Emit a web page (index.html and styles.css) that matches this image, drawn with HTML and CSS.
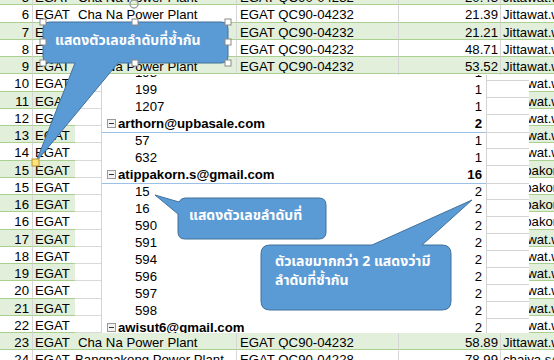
FILE: index.html
```html
<!DOCTYPE html>
<html>
<head>
<meta charset="utf-8">
<link rel="stylesheet" href="styles.css">
</head>
<body>
<div class="sheet">
  <div class="row green"><span class="c a">5</span><span class="c b">EGAT</span><span class="c cc">Cha Na Power Plant</span><span class="c d">EGAT QC90-04232</span><span class="c e">20.43</span><span class="c f">Jittawat.w@egat.co.th</span></div>
  <div class="row"><span class="c a">6</span><span class="c b">EGAT</span><span class="c cc">Cha Na Power Plant</span><span class="c d">EGAT QC90-04232</span><span class="c e">21.39</span><span class="c f">Jittawat.w@egat.co.th</span></div>
  <div class="row green"><span class="c a">7</span><span class="c b">EGAT</span><span class="c cc">Cha Na Power Plant</span><span class="c d">EGAT QC90-04232</span><span class="c e">21.21</span><span class="c f">Jittawat.w@egat.co.th</span></div>
  <div class="row"><span class="c a">8</span><span class="c b">EGAT</span><span class="c cc">Cha Na Power Plant</span><span class="c d">EGAT QC90-04232</span><span class="c e">48.71</span><span class="c f">Jittawat.w@egat.co.th</span></div>
  <div class="row green"><span class="c a">9</span><span class="c b">EGAT</span><span class="c cc">Cha Na Power Plant</span><span class="c d">EGAT QC90-04232</span><span class="c e">53.52</span><span class="c f">Jittawat.w@egat.co.th</span></div>
  <div class="row sub"><span class="c a">10</span><span class="c b">EGAT</span><span class="c cc"></span><span class="c d"></span><span class="c e"></span><span class="c f">Jittawat.w@egat.co.th</span></div>
  <div class="row sub green"><span class="c a">11</span><span class="c b">EGAT</span><span class="c cc"></span><span class="c d"></span><span class="c e"></span><span class="c f">Jittawat.w@egat.co.th</span></div>
  <div class="row sub"><span class="c a">12</span><span class="c b">EGAT</span><span class="c cc"></span><span class="c d"></span><span class="c e"></span><span class="c f">Jittawat.w@egat.co.th</span></div>
  <div class="row sub green"><span class="c a">13</span><span class="c b">EGAT</span><span class="c cc"></span><span class="c d"></span><span class="c e"></span><span class="c f">Jittawat.w@egat.co.th</span></div>
  <div class="row sub"><span class="c a">14</span><span class="c b">EGAT</span><span class="c cc"></span><span class="c d"></span><span class="c e"></span><span class="c f">Jittawat.w@egat.co.th</span></div>
  <div class="row sub green"><span class="c a">15</span><span class="c b">EGAT</span><span class="c cc"></span><span class="c d"></span><span class="c e"></span><span class="c f">atippakorn.s@gmail.com</span></div>
  <div class="row sub"><span class="c a">15</span><span class="c b">EGAT</span><span class="c cc"></span><span class="c d"></span><span class="c e"></span><span class="c f">atippakorn.s@gmail.com</span></div>
  <div class="row sub green"><span class="c a">16</span><span class="c b">EGAT</span><span class="c cc"></span><span class="c d"></span><span class="c e"></span><span class="c f">atippakorn.s@gmail.com</span></div>
  <div class="row sub"><span class="c a">16</span><span class="c b">EGAT</span><span class="c cc"></span><span class="c d"></span><span class="c e"></span><span class="c f">atippakorn.s@gmail.com</span></div>
  <div class="row sub green"><span class="c a">17</span><span class="c b">EGAT</span><span class="c cc"></span><span class="c d"></span><span class="c e"></span><span class="c f">Jittawat.w@egat.co.th</span></div>
  <div class="row sub"><span class="c a">18</span><span class="c b">EGAT</span><span class="c cc"></span><span class="c d"></span><span class="c e"></span><span class="c f">Jittawat.w@egat.co.th</span></div>
  <div class="row sub green"><span class="c a">19</span><span class="c b">EGAT</span><span class="c cc"></span><span class="c d"></span><span class="c e"></span><span class="c f">Jittawat.w@egat.co.th</span></div>
  <div class="row sub"><span class="c a">20</span><span class="c b">EGAT</span><span class="c cc"></span><span class="c d"></span><span class="c e"></span><span class="c f">Jittawat.w@egat.co.th</span></div>
  <div class="row sub green"><span class="c a">21</span><span class="c b">EGAT</span><span class="c cc"></span><span class="c d"></span><span class="c e"></span><span class="c f">Jittawat.w@egat.co.th</span></div>
  <div class="row sub"><span class="c a">22</span><span class="c b">EGAT</span><span class="c cc"></span><span class="c d"></span><span class="c e"></span><span class="c f">Jittawat.w@egat.co.th</span></div>
  <div class="row green"><span class="c a">23</span><span class="c b">EGAT</span><span class="c cc">Cha Na Power Plant</span><span class="c d">EGAT QC90-04232</span><span class="c e">58.89</span><span class="c f">Jittawat.w@egat.co.th</span></div>
  <div class="row"><span class="c a">24</span><span class="c b">EGAT</span><span class="c cc tight">Bangpakong Power Plant</span><span class="c d">EGAT QC90-04228</span><span class="c e">78.99</span><span class="c f">chaiya.s@egat.co.th</span></div>
</div>

<div class="pivot">
  <div class="pivot-inner">
    <div class="prow"><div class="pcell"><span class="item">198</span><span class="val">1</span></div><div class="strip"></div></div>
    <div class="prow"><div class="pcell"><span class="item">199</span><span class="val">1</span></div><div class="strip"></div></div>
    <div class="prow"><div class="pcell"><span class="item">1207</span><span class="val">1</span></div><div class="strip"></div></div>
    <div class="prow"><div class="pcell head"><span class="hlabel"><span class="minus"></span>arthorn@upbasale.com</span><span class="val">2</span></div><div class="strip"></div></div>
    <div class="prow"><div class="pcell"><span class="item">57</span><span class="val">1</span></div><div class="strip"></div></div>
    <div class="prow"><div class="pcell"><span class="item">632</span><span class="val">1</span></div><div class="strip"></div></div>
    <div class="prow"><div class="pcell head"><span class="hlabel"><span class="minus"></span>atippakorn.s@gmail.com</span><span class="val">16</span></div><div class="strip"></div></div>
    <div class="prow"><div class="pcell"><span class="item">15</span><span class="val">2</span></div><div class="strip"></div></div>
    <div class="prow"><div class="pcell"><span class="item">16</span><span class="val">2</span></div><div class="strip"></div></div>
    <div class="prow"><div class="pcell"><span class="item">590</span><span class="val">2</span></div><div class="strip"></div></div>
    <div class="prow"><div class="pcell"><span class="item">591</span><span class="val">2</span></div><div class="strip"></div></div>
    <div class="prow"><div class="pcell"><span class="item">594</span><span class="val">2</span></div><div class="strip"></div></div>
    <div class="prow"><div class="pcell"><span class="item">596</span><span class="val">2</span></div><div class="strip"></div></div>
    <div class="prow"><div class="pcell"><span class="item">597</span><span class="val">2</span></div><div class="strip"></div></div>
    <div class="prow"><div class="pcell"><span class="item">598</span><span class="val">2</span></div><div class="strip"></div></div>
    <div class="prow"><div class="pcell head"><span class="hlabel"><span class="minus"></span>awisut6@gmail.com</span><span class="val plain">2</span></div><div class="strip"></div></div>
  </div>
</div>

<svg class="callouts" width="554" height="360" viewBox="0 0 554 360">
  <path class="shape" d="M50,22 H221 Q228,22 228,29 V56 Q228,63 221,63 H118 L36,162 L75,63 H50 Q43,63 43,56 V29 Q43,22 50,22 Z"/>
  <text class="ctext" x="55" y="45">แสดงตัวเลขลำดับที่ซ้ำกัน</text>
  <rect class="handle" x="40" y="19" width="6" height="6"/>
  <rect class="handle" x="132" y="19" width="6" height="6"/>
  <rect class="handle" x="225" y="19" width="6" height="6"/>
  <rect class="handle" x="40" y="39" width="6" height="6"/>
  <rect class="handle" x="225" y="39" width="6" height="6"/>
  <rect class="handle" x="40" y="60" width="6" height="6"/>
  <rect class="handle" x="132" y="60" width="6" height="6"/>
  <rect class="handle" x="225" y="60" width="6" height="6"/>
  <circle class="rot" cx="134" cy="4" r="4"/>
  <rect class="adj" x="32" y="159" width="7" height="7"/>

  <path class="shape" d="M185,198 H319 Q326,198 326,205 V232 Q326,239 319,239 H185 Q178,239 178,232 V214 L155,195 L179,202 Q181,198 185,198 Z"/>
  <text class="ctext" x="189" y="220">แสดงตัวเลขลำดับที่</text>

  <path class="shape" d="M270,245 H372 L472,200 L422,245 H442 Q451,245 451,254 V301 Q451,310 442,310 H270 Q261,310 261,301 V254 Q261,245 270,245 Z"/>
  <text class="ctext" x="275" y="266">ตัวเลขมากกว่า 2 แสดงว่ามี</text>
  <text class="ctext" x="275" y="285">ลำดับที่ซ้ำกัน</text>
</svg>
</body>
</html>
```

FILE: styles.css
```css
* { box-sizing: border-box; }
html, body {
  margin: 0;
  padding: 0;
  width: 554px;
  height: 360px;
  overflow: hidden;
  background: #fff;
  font-family: "Liberation Sans", Arial, sans-serif;
  font-size: 13.2px;
  color: #000;
}
.sheet {
  margin-top: -12px;
}
.row {
  display: grid;
  grid-template-columns: 33px 42px 162px 162px 102px 53px;
  height: 17.25px;
}
.c {
  display: block;
  white-space: pre;
  overflow: hidden;
  line-height: 17px;
  padding-top: 1px;
  border-bottom: 1px solid #a9d08e;
  background: #fff;
}
.row.green .c { background: #e2efda; }
.a {
  text-align: right;
  padding-right: 3px;
  border-right: 1px solid #d6d6d6;
}
.b { padding-left: 2px; }
.cc { padding-left: 3px; border-right: 1px solid #d6d6d6; }
.cc.tight { padding-left: 0; }
.d { padding-left: 3px; border-right: 1px solid #d6d6d6; }
.e { text-align: right; padding-right: 2px; border-right: 1px solid #d6d6d6; }
.f { padding-left: 2px; }
.row.sub .cc,
.row.sub.green .cc {
  background: #fff;
  border-bottom: 1px solid #d9d9d9;
  border-right: none;
}

.pivot {
  position: absolute;
  left: 101px;
  top: 75px;
  width: 428px;
  height: 258px;
  overflow: hidden;
  background: #fff;
  border-left: 1px solid #d4d4d4;
}
.pivot-inner { margin-top: -11px; }
.prow {
  display: grid;
  grid-template-columns: 384px 43px;
  height: 17px;
}
.pcell {
  display: flex;
  align-items: center;
  justify-content: space-between;
  padding-right: 4px;
  line-height: 17px;
}
.pcell.head {
  border-bottom: 1px solid #9bc2e6;
  font-weight: bold;
}
.item { padding-left: 33px; }
.hlabel {
  display: flex;
  align-items: center;
  padding-left: 5px;
}
.minus {
  position: relative;
  width: 9px;
  height: 9px;
  margin-right: 2px;
  border: 1px solid #9a9a9a;
  background: #f3f3f3;
}
.minus::after {
  content: "";
  position: absolute;
  left: 1px;
  right: 1px;
  top: 3px;
  height: 1px;
  background: #333;
}
.val.plain { font-weight: normal; }
.strip {
  border-left: 1px solid #d4d4d4;
  border-bottom: 1px solid #d4d4d4;
}

.callouts {
  position: absolute;
  left: 0;
  top: 0;
  pointer-events: none;
}
.shape {
  fill: #5b9bd5;
  stroke: #41719c;
  stroke-width: 1;
}
.ctext {
  fill: #fff;
  font-family: "Noto Sans Thai", Tahoma, "DejaVu Sans", sans-serif;
  font-size: 14px;
  font-weight: bold;
}
.handle {
  fill: #fff;
  stroke: #8a8a8a;
  stroke-width: 1;
}
.rot {
  fill: none;
  stroke: #a0a0a0;
  stroke-width: 1.5;
}
.adj {
  fill: #ffe27a;
  stroke: #b8962e;
  stroke-width: 1;
}
```
